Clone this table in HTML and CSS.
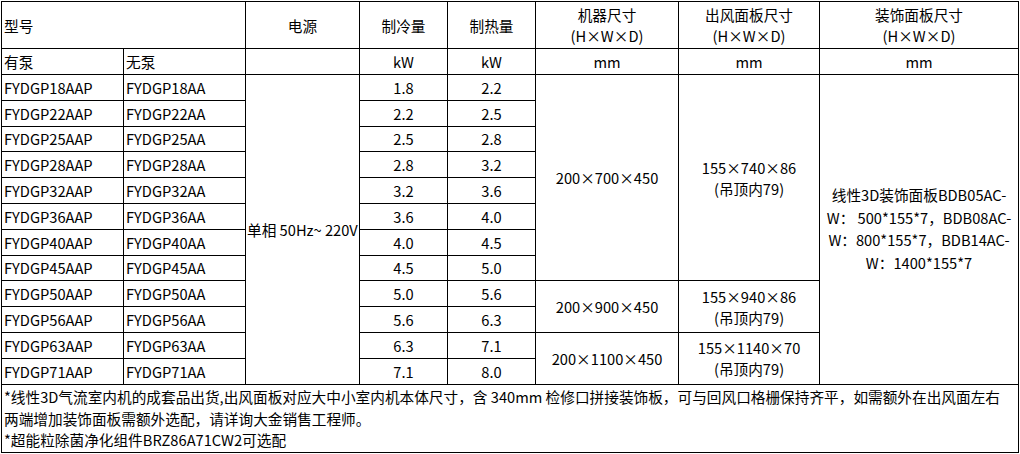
FILE: index.html
```html
<!DOCTYPE html>
<html lang="zh-CN">
<head>
<meta charset="utf-8">
<title>FYDGP 规格表</title>
<link rel="stylesheet" href="styles.css">
</head>
<body>
<table class="spec">
  <colgroup>
    <col class="c-pump">
    <col class="c-nopump">
    <col class="c-power">
    <col class="c-cool">
    <col class="c-heat">
    <col class="c-unit">
    <col class="c-outlet">
    <col class="c-deco">
  </colgroup>
  <tbody>
    <tr class="r-head">
      <td colspan="2" class="left">型号</td>
      <td>电源</td>
      <td>制冷量</td>
      <td>制热量</td>
      <td>机器尺寸<br>(H×W×D)</td>
      <td>出风面板尺寸<br>(H×W×D)</td>
      <td>装饰面板尺寸<br>(H×W×D)</td>
    </tr>
    <tr class="r-unit">
      <td class="left">有泵</td>
      <td class="left">无泵</td>
      <td></td>
      <td>kW</td>
      <td>kW</td>
      <td>mm</td>
      <td>mm</td>
      <td>mm</td>
    </tr>
    <tr class="r-data">
      <td class="left">FYDGP18AAP</td>
      <td class="left">FYDGP18AA</td>
      <td rowspan="12" class="left power">单相 50Hz~ 220V</td>
      <td>1.8</td>
      <td>2.2</td>
      <td rowspan="8">200×700×450</td>
      <td rowspan="8">155×740×86<br>(吊顶内79)</td>
      <td rowspan="12" class="deco">线性3D装饰面板BDB05AC-<br>W： 500*155*7，BDB08AC-<br>W：800*155*7，BDB14AC-<br>W：1400*155*7</td>
    </tr>
    <tr class="r-data"><td class="left">FYDGP22AAP</td><td class="left">FYDGP22AA</td><td>2.2</td><td>2.5</td></tr>
    <tr class="r-data"><td class="left">FYDGP25AAP</td><td class="left">FYDGP25AA</td><td>2.5</td><td>2.8</td></tr>
    <tr class="r-data"><td class="left">FYDGP28AAP</td><td class="left">FYDGP28AA</td><td>2.8</td><td>3.2</td></tr>
    <tr class="r-data"><td class="left">FYDGP32AAP</td><td class="left">FYDGP32AA</td><td>3.2</td><td>3.6</td></tr>
    <tr class="r-data"><td class="left">FYDGP36AAP</td><td class="left">FYDGP36AA</td><td>3.6</td><td>4.0</td></tr>
    <tr class="r-data"><td class="left">FYDGP40AAP</td><td class="left">FYDGP40AA</td><td>4.0</td><td>4.5</td></tr>
    <tr class="r-data"><td class="left">FYDGP45AAP</td><td class="left">FYDGP45AA</td><td>4.5</td><td>5.0</td></tr>
    <tr class="r-data">
      <td class="left">FYDGP50AAP</td><td class="left">FYDGP50AA</td><td>5.0</td><td>5.6</td>
      <td rowspan="2">200×900×450</td>
      <td rowspan="2">155×940×86<br>(吊顶内79)</td>
    </tr>
    <tr class="r-data"><td class="left">FYDGP56AAP</td><td class="left">FYDGP56AA</td><td>5.6</td><td>6.3</td></tr>
    <tr class="r-data">
      <td class="left">FYDGP63AAP</td><td class="left">FYDGP63AA</td><td>6.3</td><td>7.1</td>
      <td rowspan="2">200×1100×450</td>
      <td rowspan="2">155×1140×70<br>(吊顶内79)</td>
    </tr>
    <tr class="r-data"><td class="left">FYDGP71AAP</td><td class="left">FYDGP71AA</td><td>7.1</td><td>8.0</td></tr>
    <tr class="r-foot">
      <td colspan="8" class="left note">*线性3D气流室内机的成套品出货,出风面板对应大中小室内机本体尺寸，含 340mm 检修口拼接装饰板，可与回风口格栅保持齐平，如需额外在出风面左右<br>两端增加装饰面板需额外选配，请详询大金销售工程师。<br>*超能粒除菌净化组件BRZ86A71CW2可选配</td>
    </tr>
  </tbody>
</table>
</body>
</html>
```

FILE: styles.css
```css
html, body {
  margin: 0;
  padding: 0;
  background: #ffffff;
}

body {
  padding: 1px 0 0 1px;
  font-family: "Noto Sans CJK SC", "Noto Sans", sans-serif;
  font-size: 14.67px;
  color: #000000;
}

.spec {
  border-collapse: collapse;
  table-layout: fixed;
  width: 1018px;
}

.c-pump { width: 122px; }
.c-nopump { width: 122px; }
.c-power { width: 114px; }
.c-cool { width: 88px; }
.c-heat { width: 88px; }
.c-unit { width: 143px; }
.c-outlet { width: 141px; }
.c-deco { width: 199px; }

.spec td {
  border: 1px solid #000000;
  padding: 0 2px;
  text-align: center;
  vertical-align: middle;
  line-height: 21px;
  white-space: nowrap;
  overflow: visible;
}

.spec td.left {
  text-align: left;
}

.r-head { height: 47px; }
.r-unit { height: 26px; }
.r-data { height: 25.8px; }
.r-foot { height: 68px; }

.spec td.power {
  padding-left: 1px;
}

.spec td.deco {
  line-height: 22.5px;
}

.spec td.note {
  line-height: 21.5px;
  padding-top: 1px;
}
```
